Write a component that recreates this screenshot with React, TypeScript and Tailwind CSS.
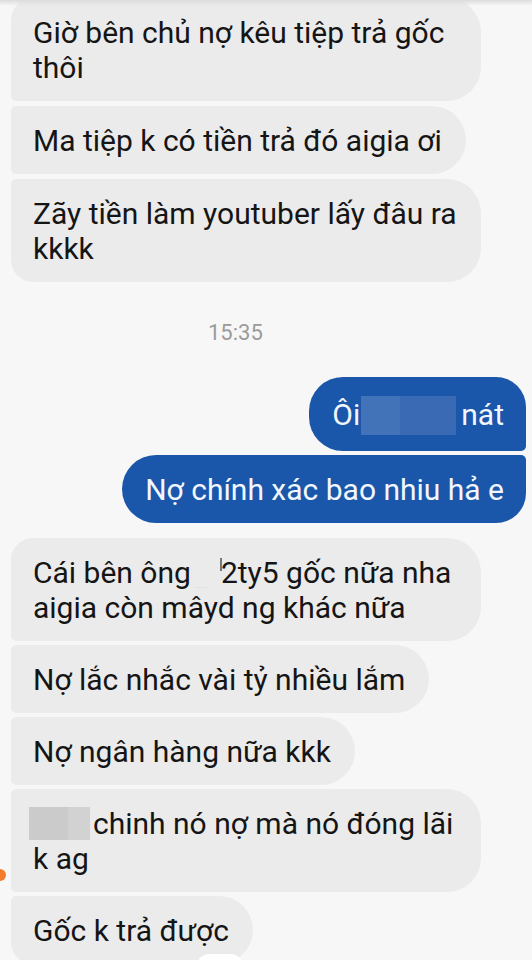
import React from "react";

const font = { fontFamily: "Roboto, 'Noto Sans', 'DejaVu Sans', sans-serif" };

function Recv({
  children,
  cls = "",
  extra,
}: {
  children: React.ReactNode;
  cls?: string;
  extra?: React.ReactNode;
}) {
  return (
    <div className="flex justify-start">
      <div
        className={
          "relative max-w-[470px] bg-[#ebebeb] text-[#151515] text-[30px] leading-[35px] pt-[17px] pb-[16px] pl-[22px] pr-[24px] rounded-r-[34px] " +
          cls
        }
      >
        {children}
        {extra}
      </div>
    </div>
  );
}

export default function App() {
  return (
    <div
      className="relative w-[532px] h-[960px] overflow-hidden bg-[#f7f7f7]"
      style={font}
    >
      <div className="flex flex-col mt-[-2px]">
        <div className="flex flex-col gap-[5px] pl-[11px]">
          <Recv cls="rounded-tl-[22px] rounded-bl-[5px] w-[470px]">
            Giờ bên chủ nợ kêu tiệp trả gốc thôi
          </Recv>
          <Recv cls="rounded-l-[5px]">Ma tiệp k có tiền trả đó aigia ơi</Recv>
          <Recv cls="rounded-tl-[5px] rounded-bl-[22px] w-[470px]">
            Zãy tiền làm youtuber lấy đâu ra kkkk
          </Recv>
        </div>

        <div className="mt-[39px] mb-[32px] flex justify-start pl-[208px]">
          <span className="text-[22px] leading-[24px] text-[#9b9b9b]">
            15:35
          </span>
        </div>

        <div className="flex flex-col items-end gap-[4px] pr-[6px]">
          <div className="bg-[#1a56aa] text-[#f2f6ff] text-[30px] leading-[35px] pt-[17px] pb-[16px] pl-[23px] pr-[22px] rounded-l-[34px] rounded-tr-[30px] rounded-br-[5px] flex items-center">
            <span>Ôi</span>
            <span className="inline-flex h-[39px] ml-[1px] mr-[5px] mt-[2px]">
              <span className="w-[39px] h-full bg-[#4272b8]" />
              <span className="w-[56px] h-full bg-[#3a6ab3]" />
            </span>
            <span>nát</span>
          </div>
          <div className="bg-[#1a56aa] text-[#f2f6ff] text-[30px] leading-[35px] pt-[17px] pb-[16px] pl-[23px] pr-[22px] rounded-l-[34px] rounded-tr-[5px] rounded-br-[30px]">
            Nợ chính xác bao nhiu hả e
          </div>
        </div>

        <div className="mt-[15px] flex flex-col gap-[4px] pl-[11px]">
          <Recv cls="rounded-tl-[22px] rounded-bl-[5px] w-[470px]">
            Cái bên ông
            <span className="inline-block relative w-[30px] h-[20px] align-baseline">
              <span className="absolute left-[4px] bottom-[-5px] w-[12px] h-[1px] bg-[#e2e2e2]" />
              <span className="absolute right-[-1px] bottom-[12px] w-[2px] h-[13px] bg-[#777]" />
            </span>
            2ty5 gốc nữa nha aigia còn mâyd ng khác nữa
          </Recv>
          <Recv cls="rounded-l-[5px]">Nợ lắc nhắc vài tỷ nhiều lắm</Recv>
          <Recv cls="rounded-l-[5px]">Nợ ngân hàng nữa kkk</Recv>
          <Recv
            cls="rounded-l-[5px] w-[470px]"
            extra={
              <span className="absolute left-[-17px] top-[80px] w-[12px] h-[12px] rounded-full bg-[#f47a2c]" />
            }
          >
            <span className="inline-flex h-[33px] ml-[-4px] mr-[3px] align-[-6px]">
              <span className="w-[39px] h-full bg-[#cbcbcb]" />
              <span className="w-[22px] h-full bg-[#d2d2d2]" />
            </span>
            chinh nó nợ mà nó đóng lãi k ag
          </Recv>
          <Recv
            cls="rounded-tl-[5px] rounded-bl-[22px]"
            extra={
              <span className="absolute left-[186px] top-[58px] w-[46px] h-[24px] rounded-full bg-white" />
            }
          >
            Gốc k trả được
          </Recv>
        </div>
      </div>

      <div className="absolute top-0 left-0 right-0 h-[6px] bg-gradient-to-b from-[#dcdcdc] to-transparent" />
    </div>
  );
}
